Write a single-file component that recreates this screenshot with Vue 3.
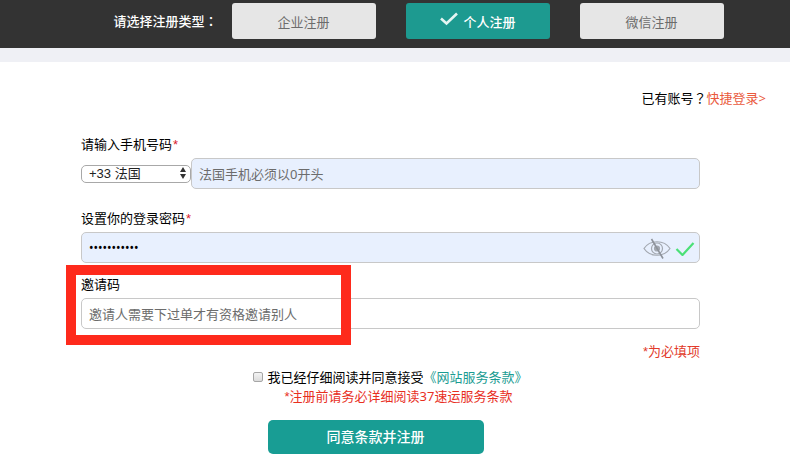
<template>
  <div class="register-page">
    <div class="type-bar">
      <span class="type-label">请选择注册类型<span class="punct">：</span></span>
      <div class="type-list">
        <button
          v-for="item in types"
          :key="item.id"
          type="button"
          class="type-btn"
          :class="{ active: item.id === current }"
          @click="current = item.id"
        >
          <svg v-if="item.id === current" class="type-check" viewBox="0 0 18 14">
            <path d="M1 6.5 L6.5 11.5 L17 1.5" />
          </svg>
          {{ item.name }}
        </button>
      </div>
    </div>

    <div class="login-row">
      已有账号<span class="punct">？</span><a href="#" class="login-link">快捷登录&gt;</a>
    </div>

    <form class="register-form" @submit.prevent>
      <div class="field">
        <label for="phone">请输入手机号码<i class="star">*</i></label>
        <div class="phone-row">
          <div class="area">
            <select v-model="area" class="area-select" aria-label="国家区号">
              <option v-for="a in areas" :key="a.code" :value="a.code">{{ a.code }} {{ a.name }}</option>
            </select>
            <svg class="area-arrows" viewBox="0 0 8 14">
              <path d="M4 1 L7 6 H1 Z M4 13 L1 8 H7 Z" />
            </svg>
          </div>
          <input id="phone" v-model="phone" type="tel" class="text-input filled" placeholder="法国手机必须以0开头" />
        </div>
      </div>

      <div class="field">
        <label for="password">设置你的登录密码<i class="star">*</i></label>
        <div class="password-row">
          <input
            id="password"
            v-model="password"
            :type="showPassword ? 'text' : 'password'"
            class="text-input filled password-input"
            autocomplete="off"
          />
          <div class="password-tools">
            <button type="button" class="eye-btn" aria-label="显示密码" @click="showPassword = !showPassword">
              <svg viewBox="0 0 28 24">
                <path d="M1 12.5 C7 3.5 21 3.5 27 12.5 C21 21.5 7 21.5 1 12.5 Z" />
                <circle cx="14" cy="12.5" r="5.5" />
                <circle cx="14" cy="12.5" r="2.5" class="pupil" />
                <path d="M8.5 3 L20 22.5" class="slash" />
              </svg>
            </button>
            <svg class="ok-icon" viewBox="0 0 20 16">
              <path d="M1.5 9 L7.5 15 L18.5 3" />
            </svg>
          </div>
        </div>
      </div>

      <div class="field invite">
        <label for="invite">邀请码</label>
        <input id="invite" v-model="invite" type="text" class="text-input" placeholder="邀请人需要下过单才有资格邀请别人" />
        <div class="highlight"></div>
      </div>

      <p class="required-tip"><span class="star">*</span>为必填项</p>

      <div class="agree-row">
        <input id="agree" v-model="agreed" type="checkbox" class="agree-box" />
        <label for="agree">我已经仔细阅读并同意接受</label>
        <a href="#" class="terms-link">《网站服务条款》</a>
      </div>
      <p class="terms-tip"><span class="star">*</span>注册前请务必详细阅读37速运服务条款</p>

      <div class="submit-row">
        <button type="submit" class="submit-btn">同意条款并注册</button>
      </div>
    </form>
  </div>
</template>

<script setup>
import { ref } from 'vue'

const types = [
  { id: 'company', name: '企业注册' },
  { id: 'personal', name: '个人注册' },
  { id: 'wechat', name: '微信注册' }
]

const areas = [
  { code: '+33', name: '法国' },
  { code: '+49', name: '德国' },
  { code: '+86', name: '中国' }
]

const current = ref('personal')
const area = ref('+33')
const phone = ref('')
const password = ref('abc12345678')
const showPassword = ref(false)
const invite = ref('')
const agreed = ref(false)
</script>

<style>
body {
  margin: 0;
  background: #fff;
}
</style>

<style scoped>
.register-page {
  font-family: 'Noto Sans', 'Noto Sans CJK SC', sans-serif;
  font-size: 13px;
  line-height: 20px;
  color: #000;
}

.register-page button,
.register-page input,
.register-page select {
  font-family: inherit;
  font-size: 13px;
  box-sizing: border-box;
  margin: 0;
}

.register-page a {
  text-decoration: none;
}

p {
  margin: 0;
}

.punct {
  font-family: 'Noto Sans CJK TC', sans-serif;
  line-height: 1;
}

.star {
  font-family: 'Liberation Sans', sans-serif;
  font-style: normal;
  line-height: 1;
}

.type-bar {
  display: flex;
  justify-content: center;
  align-items: center;
  padding: 3px 0 9px 47px;
  background: #333;
  border-bottom: 14px solid #eff0f5;
}

.type-label {
  margin-right: 14px;
  color: #fff;
  font-weight: 500;
}

.type-list {
  display: flex;
  gap: 30px;
}

.type-btn {
  display: flex;
  align-items: center;
  justify-content: center;
  gap: 6px;
  width: 144px;
  height: 36px;
  padding: 0;
  border: none;
  border-radius: 3px;
  background: #e6e6e6;
  color: #6c6c6c;
  cursor: pointer;
}

.type-btn.active {
  background: #1d9a90;
  color: #fff;
  font-weight: 500;
}

.type-check {
  width: 18px;
  height: 14px;
  margin-bottom: 4px;
  fill: none;
  stroke: #e4f5f2;
  stroke-width: 2.6;
}

.login-row {
  padding: 26px 24px 0;
  text-align: right;
}

.login-link {
  color: #ea5a3d;
}

.register-form {
  padding: 26px 90px 20px 81px;
}

.field {
  margin-bottom: 19px;
}

.field label {
  display: block;
  margin-bottom: 4px;
}

.field .star {
  margin-left: 1px;
  color: #d9202c;
}

.text-input {
  display: block;
  width: 100%;
  height: 31px;
  padding: 0 7px;
  border: 1px solid #c8c8c8;
  border-radius: 5px;
  background: #fff;
  color: #000;
  outline: none;
}

.text-input::placeholder {
  color: #6c6c6c;
}

.text-input.filled {
  background: #e8f0fe;
}

.register-page .password-input {
  font-size: 12px;
}

.phone-row {
  display: flex;
  align-items: center;
}

.area {
  position: relative;
  display: flex;
  flex: 0 0 110px;
}

.area-select {
  width: 100%;
  height: 18px;
  padding: 0 18px 0 7px;
  border: 1px solid #a8a8a8;
  border-radius: 5px;
  background: #fff;
  color: #222;
  appearance: none;
}

.register-page .area-select {
  font-family: 'Liberation Sans', 'Noto Sans CJK SC', sans-serif;
}

.area-arrows {
  position: absolute;
  top: 1px;
  right: 4px;
  width: 8px;
  height: 14px;
  fill: #333;
  pointer-events: none;
}

.password-row {
  position: relative;
}

.password-tools {
  position: absolute;
  top: 0;
  right: 5px;
  display: flex;
  align-items: center;
  gap: 4px;
  height: 100%;
}

.eye-btn {
  display: flex;
  width: 28px;
  height: 24px;
  padding: 0;
  border: none;
  background: transparent;
  cursor: pointer;
}

.eye-btn svg {
  width: 28px;
  height: 24px;
  fill: none;
  stroke: #a3a8b0;
  stroke-width: 1.2;
}

.eye-btn .pupil {
  fill: #a3a8b0;
}

.eye-btn .slash {
  stroke: #8d929a;
  stroke-width: 1.6;
}

.ok-icon {
  width: 20px;
  height: 16px;
  fill: none;
  stroke: #4be077;
  stroke-width: 2.2;
}

.field.invite {
  position: relative;
  margin: -8px 0 12px;
}

.highlight {
  position: absolute;
  top: -9px;
  left: -15px;
  box-sizing: border-box;
  width: 285px;
  height: 80px;
  border: 10px solid #fe2a1c;
  pointer-events: none;
}

.required-tip {
  color: #e23a2a;
  text-align: right;
}

.agree-row {
  display: flex;
  align-items: center;
  justify-content: center;
  margin-top: 6px;
}

.agree-box {
  width: 10px;
  height: 10px;
  border: 1px solid #a6a6a6;
  border-radius: 2px;
  background: linear-gradient(#f4f4f4, #dcdcdc);
  appearance: none;
}

.agree-box:checked {
  background: #1d9a90;
}

.agree-row label {
  margin-left: 4px;
}

.terms-link {
  color: #1a9c92;
}

.terms-tip {
  padding-left: 16px;
  color: #e8301f;
  line-height: 19px;
  text-align: center;
}

.submit-row {
  display: flex;
  justify-content: center;
  margin-top: 14px;
  padding-right: 30px;
}

.register-page .submit-btn {
  width: 216px;
  height: 34px;
  padding: 0 0 2px;
  border: none;
  border-radius: 5px;
  background: #189d94;
  color: #fff;
  font-size: 14px;
  font-weight: 500;
  cursor: pointer;
}
</style>
